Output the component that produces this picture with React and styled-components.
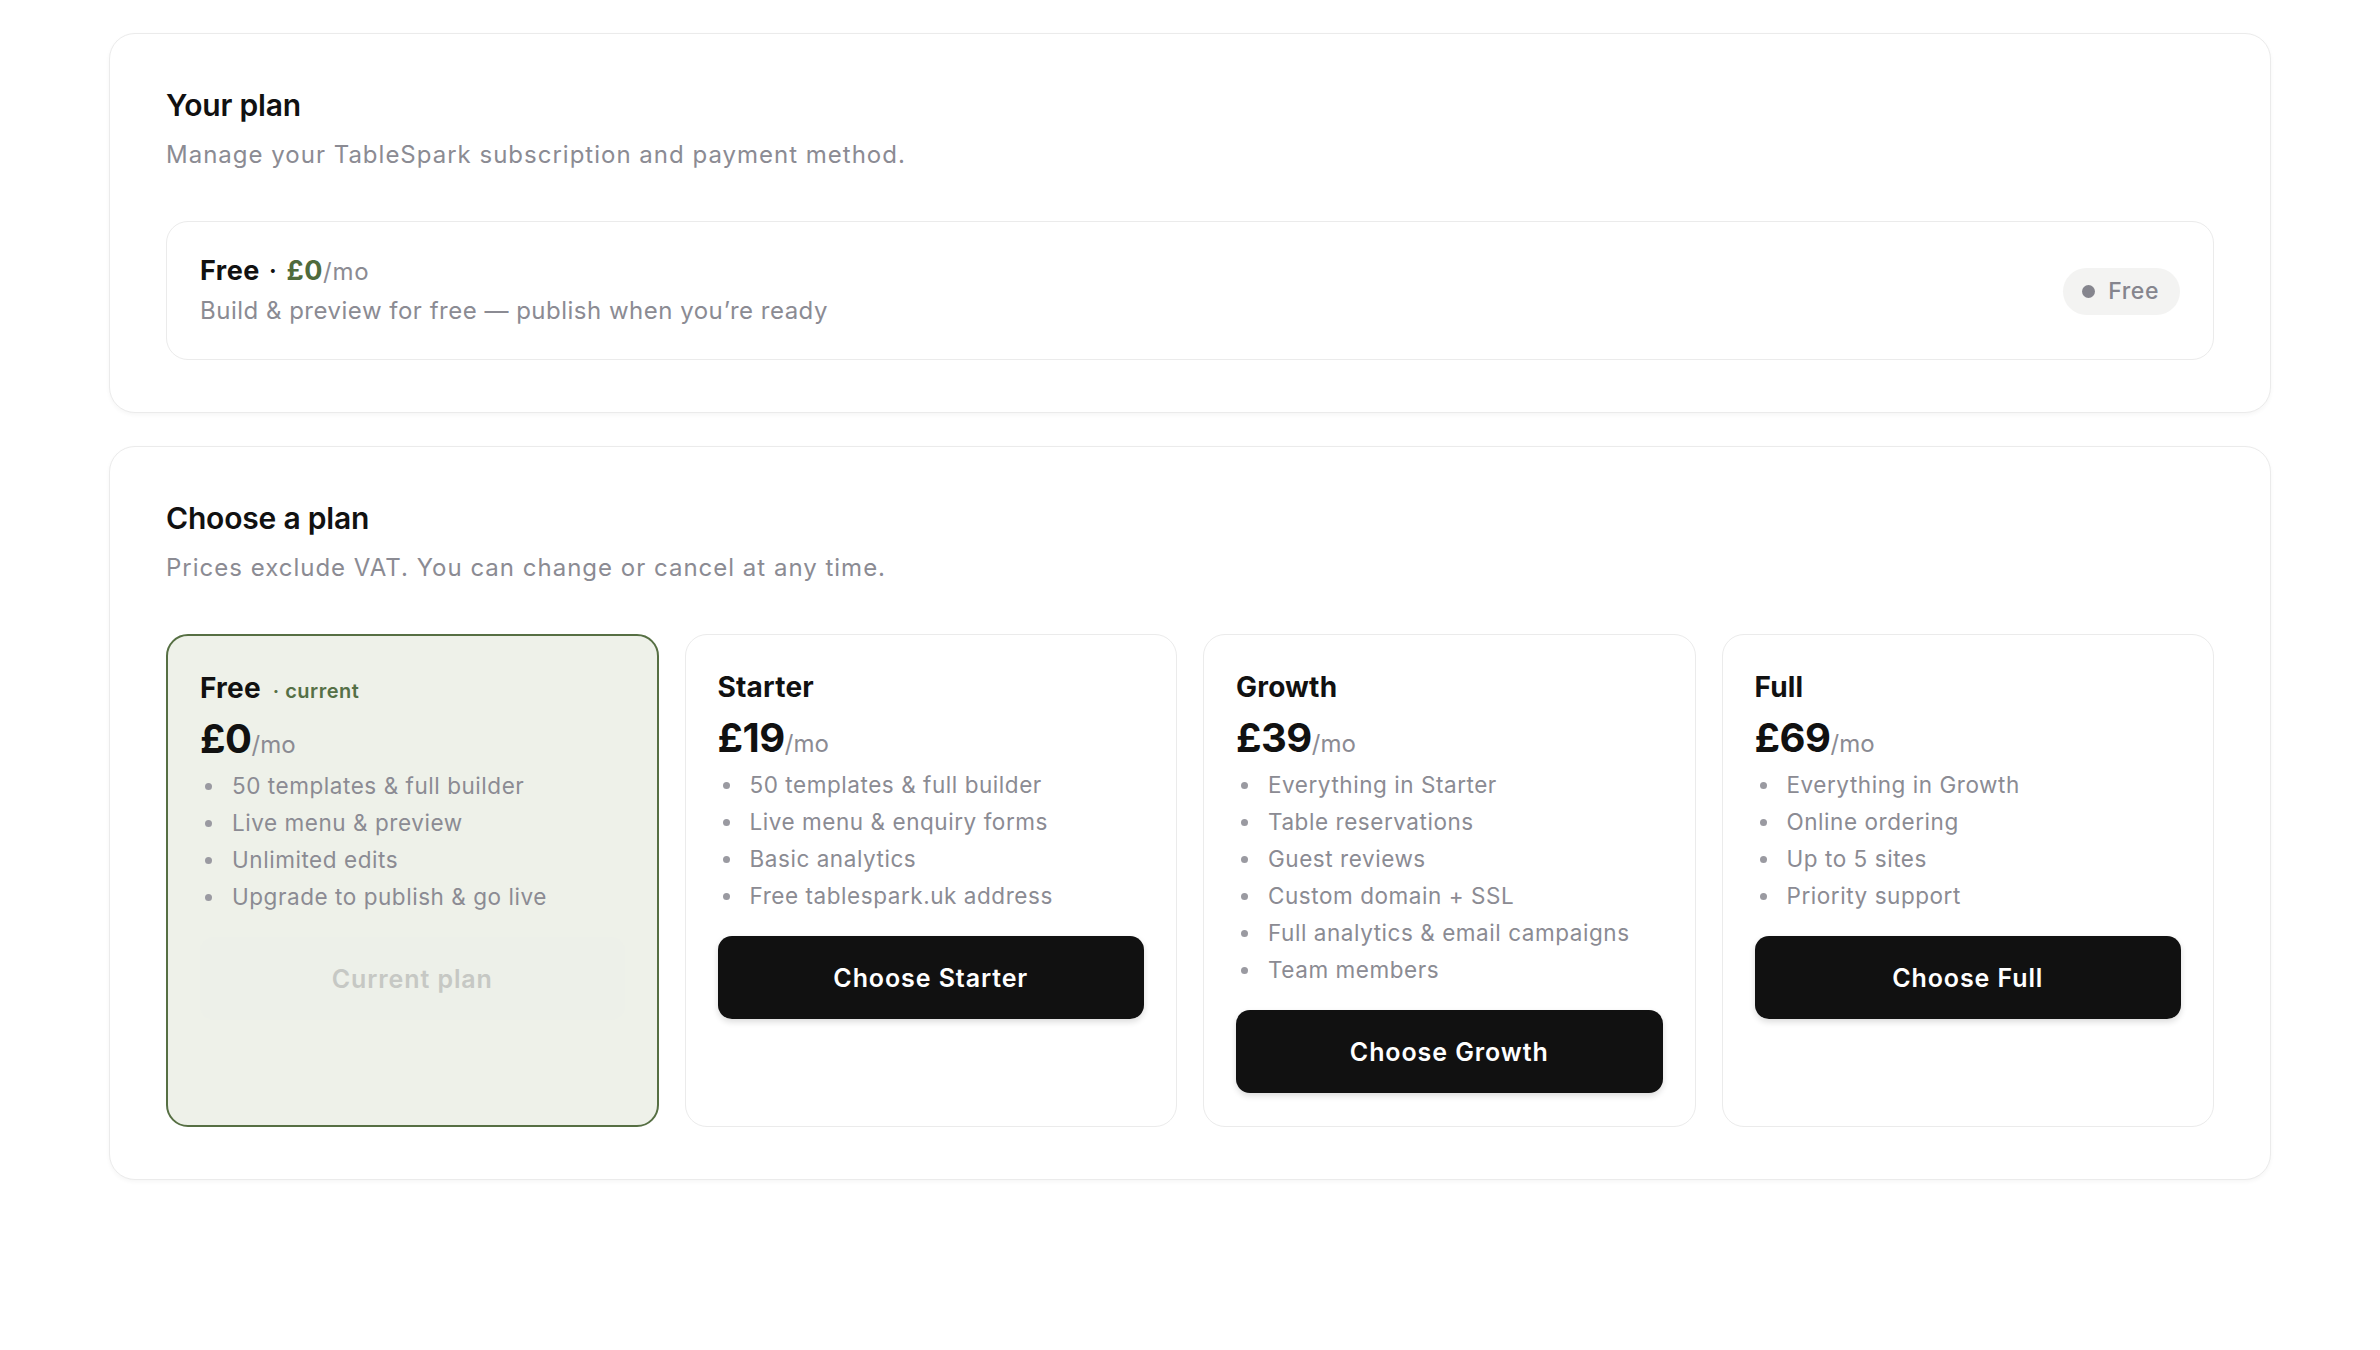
import styled, { createGlobalStyle } from 'styled-components';

const GlobalStyle = createGlobalStyle`
  * { box-sizing: border-box; }
  body {
    margin: 0;
    background: #ffffff;
    font-family: Inter, "Noto Sans", sans-serif;
    color: #111111;
  }
`;

const plans = [
  {
    name: 'Free',
    price: '£0',
    current: true,
    features: [
      '50 templates & full builder',
      'Live menu & preview',
      'Unlimited edits',
      'Upgrade to publish & go live',
    ],
  },
  {
    name: 'Starter',
    price: '£19',
    features: [
      '50 templates & full builder',
      'Live menu & enquiry forms',
      'Basic analytics',
      'Free tablespark.uk address',
    ],
  },
  {
    name: 'Growth',
    price: '£39',
    features: [
      'Everything in Starter',
      'Table reservations',
      'Guest reviews',
      'Custom domain + SSL',
      'Full analytics & email campaigns',
      'Team members',
    ],
  },
  {
    name: 'Full',
    price: '£69',
    features: [
      'Everything in Growth',
      'Online ordering',
      'Up to 5 sites',
      'Priority support',
    ],
  },
];

const Page = () => (
  <>
    <GlobalStyle />
    <Main>
      <Section>
        <Title>Your plan</Title>
        <Subtitle>Manage your TableSpark subscription and payment method.</Subtitle>
        <CurrentCard>
          <div>
            <CurrentName>
              Free<Dot>·</Dot><Green>£0</Green>
              <Per>/mo</Per>
            </CurrentName>
            <CurrentNote>Build &amp; preview for free — publish when you’re ready</CurrentNote>
          </div>
          <Badge>
            <BadgeDot />
            Free
          </Badge>
        </CurrentCard>
      </Section>

      <Section>
        <Title>Choose a plan</Title>
        <Subtitle>Prices exclude VAT. You can change or cancel at any time.</Subtitle>
        <PlanGrid>
          {plans.map((plan) => (
            <PlanCard key={plan.name} $current={plan.current}>
              <PlanName>
                {plan.name}
                {plan.current && <CurrentTag>· current</CurrentTag>}
              </PlanName>
              <Price>
                {plan.price}
                <PricePer>/mo</PricePer>
              </Price>
              <Features>
                {plan.features.map((f) => (
                  <Feature key={f}>{f}</Feature>
                ))}
              </Features>
              {plan.current ? (
                <DisabledButton disabled>Current plan</DisabledButton>
              ) : (
                <ChooseButton>Choose {plan.name}</ChooseButton>
              )}
            </PlanCard>
          ))}
        </PlanGrid>
      </Section>
    </Main>
  </>
);

const Main = styled.main`
  display: flex;
  flex-direction: column;
  gap: 33px;
  padding: 33px 109px 120px;
`;

const Section = styled.section`
  border: 1.5px solid #ebebeb;
  border-radius: 26px;
  background: #ffffff;
  box-shadow: 0 2px 4px rgba(0, 0, 0, 0.04);
  padding: 53px 56px 52px;
`;

const Title = styled.h2`
  margin: 0;
  font-size: 30px;
  line-height: 36px;
  font-weight: 600;
  letter-spacing: -0.2px;
  color: #111111;
`;

const Subtitle = styled.p`
  margin: 14px 0 48px;
  font-size: 24px;
  line-height: 36px;
  letter-spacing: 1px;
  color: #8b8b93;
`;

const CurrentCard = styled.div`
  display: flex;
  align-items: center;
  justify-content: space-between;
  border: 1.5px solid #ebebeb;
  border-radius: 22px;
  padding: 31px 33px 30px;
`;

const CurrentName = styled.div`
  font-size: 27px;
  line-height: 36px;
  font-weight: 700;
  letter-spacing: 0.5px;
  color: #111111;
`;

const Dot = styled.span`
  margin: 0 9px;
  font-weight: 500;
`;

const Green = styled.span`
  color: #4f6b3c;
`;

const Per = styled.span`
  font-weight: 400;
  font-size: 24px;
  letter-spacing: 0.8px;
  color: #8b8b93;
`;

const CurrentNote = styled.div`
  margin-top: 3px;
  font-size: 24px;
  line-height: 36px;
  letter-spacing: 0.5px;
  color: #8b8b93;
`;

const Badge = styled.span`
  display: inline-flex;
  align-items: center;
  gap: 13px;
  height: 47px;
  padding: 0 21px 0 19px;
  border-radius: 999px;
  background: #f3f3f2;
  color: #85858e;
  font-size: 23px;
  font-weight: 500;
  letter-spacing: 0.6px;
`;

const BadgeDot = styled.span`
  width: 13px;
  height: 13px;
  border-radius: 50%;
  background: #85858e;
`;

const PlanGrid = styled.div`
  display: grid;
  grid-template-columns: repeat(4, 1fr);
  gap: 26px;
`;

const PlanCard = styled.div`
  display: flex;
  flex-direction: column;
  border-radius: 22px;
  padding: 34px 32px 33px;
  border: ${(p) => (p.$current ? '2px solid #566f43' : '1.5px solid #ebebeb')};
  background: ${(p) => (p.$current ? '#eef1e9' : '#ffffff')};
`;

const PlanName = styled.div`
  display: flex;
  align-items: baseline;
  gap: 12px;
  height: 36px;
  font-size: 28px;
  line-height: 36px;
  font-weight: 700;
  letter-spacing: 0.2px;
  color: #111111;
`;

const CurrentTag = styled.span`
  font-size: 20px;
  line-height: 1;
  font-weight: 600;
  letter-spacing: 0.5px;
  color: #557046;
`;

const Price = styled.div`
  margin-top: 15px;
  font-size: 40px;
  line-height: 36px;
  font-weight: 700;
  letter-spacing: -0.5px;
  color: #111111;
`;

const PricePer = styled.span`
  font-size: 24px;
  font-weight: 400;
  letter-spacing: 0;
  color: #8b8b93;
`;

const Features = styled.ul`
  list-style: none;
  margin: 4px 0 22px;
  padding: 0;
`;

const Feature = styled.li`
  position: relative;
  padding-left: 32px;
  font-size: 22.5px;
  line-height: 37px;
  letter-spacing: 0.55px;
  color: #8b8b93;

  &::before {
    content: '';
    position: absolute;
    left: 5px;
    top: 15.5px;
    width: 7px;
    height: 7px;
    border-radius: 50%;
    background: #9a9aa1;
  }
`;

const ChooseButton = styled.button`
  height: 83px;
  width: 100%;
  border: none;
  border-radius: 14px;
  background: #111111;
  color: #ffffff;
  font-family: inherit;
  font-size: 25px;
  font-weight: 600;
  letter-spacing: 0.9px;
  box-shadow: 0 3px 6px rgba(0, 0, 0, 0.14);
  cursor: pointer;
`;

const DisabledButton = styled(ChooseButton)`
  background: #edf0e9;
  color: #c6c8c4;
  box-shadow: none;
  cursor: default;
`;

export default Page;
